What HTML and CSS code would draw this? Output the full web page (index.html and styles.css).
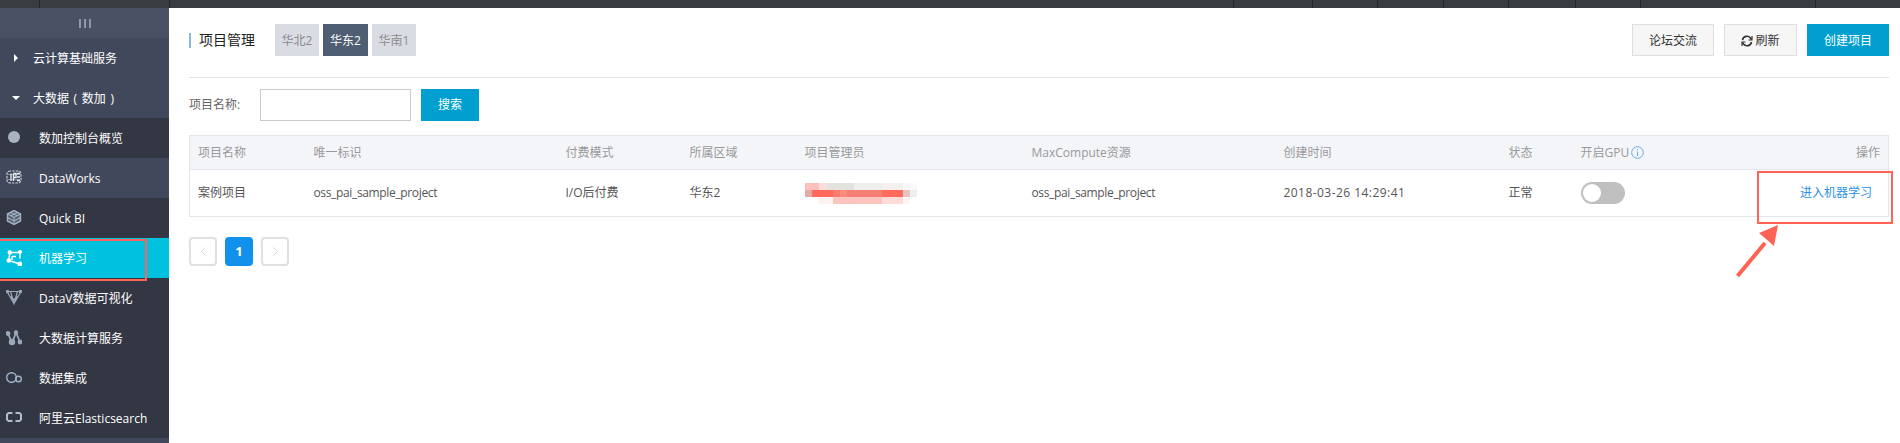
FILE: index.html
```html
<!DOCTYPE html>
<html lang="zh">
<head>
<meta charset="utf-8">
<title>项目管理</title>
<link rel="stylesheet" href="styles.css">
</head>
<body>
<header class="topbar">
  <i class="sep s1"></i><i class="sep s2"></i><span class="grow"></span>
  <i class="sep s3"></i><i class="sep s4"></i><i class="sep s5"></i><i class="sep s6"></i><i class="sep s7"></i><i class="sep s8"></i><i class="sep s9"></i><i class="sep s10"></i>
</header>
<div class="page">
  <aside class="side">
    <div class="collapse"><i></i><i></i><i></i></div>
    <div class="group"><svg class="caret" width="6" height="8" viewBox="0 0 6 8"><path d="M1 0l4 4-4 4z" fill="#fff"/></svg><span>云计算基础服务</span></div>
    <div class="group"><svg class="caret" width="8" height="6" viewBox="0 0 8 6"><path d="M0 1h8L4 5z" fill="#fff"/></svg><span class="paren">大数据 ( 数加 )</span></div>
    <a class="item dark"><svg class="ico" viewBox="0 0 16 16"><circle cx="8" cy="7" r="6" fill="#a9b3c0"/></svg><span>数加控制台概览</span></a>
    <a class="item light"><svg class="ico" viewBox="0 0 16 16" fill="none" stroke="#c3cad2" stroke-width="1.200"><path d="M4.500 1c-2 0-3.500 1-3.500 3v6c0 2 1.500 3 3.500 3h7c2 0 3.500-1 3.500-3V4c0-2-1.500-3-3.500-3z" stroke-dasharray="2.500 1"/><path d="M1 4.500h14M1 9.500h14" stroke-width=".8" stroke="#8f9bab"/><path d="M5 3.500v7.500M7.500 3.500v7.500M7.500 3.500h2.500v4H7.500M11 3.500h3M11 7h3M11 10.500h3" stroke="#eef0f3" stroke-width="1.300"/></svg><span>DataWorks</span></a>
    <a class="item dark"><svg class="ico" viewBox="0 0 16 16" fill="#566276" stroke="#a3b0bf" stroke-width="1.500"><path d="M8 .5l6.500 3.500v7L8 14.500 1.500 11V4z"/><path d="M1.500 4L8 7.500 14.500 4M8 7.500v7M4.500 2.500l7 3.500M11.500 2.500l-7 3.500M1.500 7.500L8 11l6.500-3.500" fill="none" stroke-width="1.100"/></svg><span>Quick BI</span></a>
    <a class="item active"><svg class="ico" viewBox="0 0 16 16" fill="none" stroke="#fff" stroke-width="1.500"><path d="M4 2.500h9.500M14 1.500v7M3.800 2.500L2.800 10.500l11 3.500M6 6.500h4M6 6.500v3.500"/><circle cx="3.800" cy="2.500" r="1.500" fill="#fff"/><circle cx="14" cy="2" r="1.300" fill="#fff"/><circle cx="14" cy="14" r="1.800" fill="#fff"/><circle cx="2.800" cy="10.500" r="1.600" fill="#fff"/></svg><span>机器学习</span></a>
    <a class="item dark"><svg class="ico" viewBox="0 0 16 16" fill="none" stroke="#9aa8b8" stroke-width="1.200"><path d="M1 1.500h14L8 13.500zM4.500 1.500L8 13.500 11.500 1.500M4 6.500l4 3 4-3"/><circle cx="1.500" cy="1.500" r="1.100" fill="#9aa8b8"/><circle cx="14.500" cy="1.500" r="1.100" fill="#9aa8b8"/></svg><span>DataV数据可视化</span></a>
    <a class="item dark"><svg class="ico" viewBox="0 0 16 16" fill="none" stroke="#9aa8b8" stroke-width="1.800"><path d="M2 3.500l2.500 6L6 13l4-10.500 4 9.500"/><circle cx="2" cy="3.500" r="1.500" fill="#9aa8b8"/><circle cx="6" cy="12" r="2.300" fill="#9aa8b8"/><circle cx="10" cy="2.500" r="1.300" fill="#9aa8b8"/><circle cx="14" cy="12" r="1.500" fill="#9aa8b8"/></svg><span>大数据计算服务</span></a>
    <a class="item dark"><svg class="ico" viewBox="0 0 16 16" fill="none" stroke="#9fb3c6" stroke-width="1.400"><circle cx="5.500" cy="7.500" r="4.800"/><circle cx="12.500" cy="9" r="2.800"/></svg><span>数据集成</span></a>
    <a class="item dark"><svg class="ico" viewBox="0 0 16 16" fill="none" stroke="#b3bcc6" stroke-width="2"><path d="M6.500 3H2.500L1 4.500v5L2.500 11h4M9.500 3h4L15 4.500v5L13.500 11h-4"/></svg><span>阿里云Elasticsearch</span></a>
    <div class="side-foot"></div>
  </aside>
  <main class="main">
    <div class="head">
      <h1 class="title">项目管理</h1>
      <div class="tabs">
        <a class="tab">华北2</a><a class="tab on">华东2</a><a class="tab">华南1</a>
      </div>
      <div class="actions">
        <a class="btn">论坛交流</a>
        <a class="btn btn-refresh"><svg class="refresh" viewBox="0 0 12 12" fill="none" stroke="#333" stroke-width="1.600"><path d="M1.500 5A4.500 4.500 0 0 1 9.500 3L10.500 4.500M10.500 7A4.500 4.500 0 0 1 2.500 9L1.500 7.500"/><path d="M11 1v4H7.500M1 11V7h3.500" stroke-width="1.200"/></svg>刷新</a>
        <a class="btn primary">创建项目</a>
      </div>
    </div>
    <form class="search">
      <label class="search-label">项目名称:</label>
      <input class="search-input" type="text">
      <a class="search-btn">搜索</a>
    </form>
    <table class="grid">
      <colgroup>
        <col class="c1"><col class="c2"><col class="c3"><col class="c4"><col class="c5"><col class="c6"><col class="c7"><col class="c8"><col class="c9"><col>
      </colgroup>
      <thead>
        <tr>
          <th>项目名称</th><th>唯一标识</th><th>付费模式</th><th>所属区域</th><th>项目管理员</th><th>MaxCompute资源</th><th>创建时间</th><th>状态</th>
          <th>开启GPU<svg class="info" viewBox="0 0 13 13" fill="none" stroke="#6aa6e8"><circle cx="6.500" cy="6.500" r="5.800"/><path d="M6.500 5.500v4.500M6.500 3v1.300"/></svg></th>
          <th class="right">操作</th>
        </tr>
      </thead>
      <tbody>
        <tr>
          <td>案例项目</td><td class="tight">oss_pai_sample_project</td><td>I/O后付费</td><td>华东2</td>
          <td>
            <svg class="mosaic" width="112" height="21" viewBox="0 0 112 21" shape-rendering="crispEdges">
              <rect x="0" y="0" width="14" height="7" fill="#ffc0bb"/><rect x="14" y="0" width="7" height="7" fill="#fde0dd"/><rect x="21" y="0" width="28" height="7" fill="#e2e2de"/><rect x="49" y="0" width="28" height="7" fill="#eeeeec"/><rect x="77" y="0" width="21" height="7" fill="#f5f0f0"/><rect x="98" y="0" width="14" height="7" fill="#fafafa"/>
              <rect x="0" y="7" width="7" height="7" fill="#e6a9a4"/><rect x="7" y="7" width="21" height="7" fill="#ff6a5c"/><rect x="28" y="7" width="7" height="7" fill="#fb7a6e"/><rect x="35" y="7" width="7" height="7" fill="#ff8a7e"/><rect x="42" y="7" width="35" height="7" fill="#f47f74"/><rect x="77" y="7" width="21" height="7" fill="#ff6a5c"/><rect x="98" y="7" width="7" height="7" fill="#e2c4c3"/><rect x="105" y="7" width="7" height="7" fill="#eeeeea"/>
              <rect x="14" y="14" width="14" height="7" fill="#fff3f1"/><rect x="28" y="14" width="49" height="7" fill="#ffc4be"/><rect x="77" y="14" width="21" height="7" fill="#ffdcd8"/><rect x="98" y="14" width="7" height="7" fill="#fff5f4"/>
            </svg>
          </td>
          <td class="tight">oss_pai_sample_project</td><td class="wide">2018-03-26 14:29:41</td><td>正常</td>
          <td><span class="switch"><i></i></span></td>
          <td class="right"><a class="link">进入机器学习</a></td>
        </tr>
      </tbody>
    </table>
    <nav class="pager">
      <a class="pg"><svg width="7" height="9" viewBox="0 0 7 9" fill="none" stroke="#d5d5d5"><path d="M5.500 .5l-4 4 4 4"/></svg></a>
      <a class="pg cur">1</a>
      <a class="pg"><svg width="7" height="9" viewBox="0 0 7 9" fill="none" stroke="#d5d5d5"><path d="M1.500 .5l4 4-4 4"/></svg></a>
    </nav>
  </main>
</div>
<div class="mark mark-side"></div>
<div class="mark mark-op"></div>
<svg class="arrow" width="46" height="60" viewBox="0 0 46 60"><path d="M2.500 54L30 21" stroke="#ff6355" stroke-width="4" fill="none"/><path d="M43 3L39 24 24 11z" fill="#ff6355"/></svg>
</body>
</html>
```
FILE: styles.css
```css
* { box-sizing: border-box; }
html, body { margin: 0; height: 100%; }
body {
  position: relative;
  height: 443px;
  overflow: hidden;
  background: #fff;
  font: 12px/1.5 "Open Sans", "Noto Sans CJK SC", sans-serif;
  color: #333;
}
a { text-decoration: none; color: inherit; }

.topbar { display: flex; height: 8px; background: #383d42; }
.sep { width: 1px; background: #24282c; }
.grow { flex: 0 0 1063px; }
.s4 { margin-left: 78px; }
.s5 { margin-left: 64px; }
.s6 { margin-left: 65px; }
.s7 { margin-left: 64px; }
.s8 { margin-left: 66px; }
.s9 { margin-left: 64px; }
.s10 { margin-left: 174px; }
.s1 { margin-left: 39px; }
.s2 { margin-left: 129px; }

.page { display: flex; height: 435px; }

.side { flex: 0 0 169px; display: flex; flex-direction: column; background: #42485c; color: #fff; }
.collapse { height: 30px; display: flex; align-items: center; justify-content: center; gap: 3px; background: #4a5165; }
.collapse i { width: 2px; height: 9px; background: #8d99a8; }
.group { height: 40px; display: flex; align-items: center; padding-left: 12px; }
.group .caret { flex: 0 0 8px; margin-right: 13px; }
.group span { white-space: nowrap; padding-top: 2px; }
.group .paren { word-spacing: 1.500px; }
.item { height: 40px; display: flex; align-items: center; padding-left: 6px; white-space: nowrap; }
.item span { padding-top: 2px; }
.item .ico { width: 16px; height: 16px; margin-right: 17px; flex: none; }
.item.dark { background: #333643; }
.item.light { background: #42485c; }
.item.active { background: #00c1de; }
.side-foot { flex: 1; background: #42485c; }

.main { flex: 1; padding: 16px 11px 0 20px; min-width: 0; }
.head { display: flex; align-items: center; height: 32px; }
.title {
  margin: 0;
  padding-left: 8px;
  padding-bottom: 2px;
  font-size: 14px;
  font-weight: 400;
  line-height: 13px;
  border-left: 2px solid #88b7e0;
  width: 86px;
  white-space: nowrap;
  color: #222;
}
.tabs { display: flex; gap: 4px; }
.tab { width: 44px; height: 32px; line-height: 34px; text-align: center; background: #d9dce3; color: #8b8b8b; }
.tab.on { width: 45px; background: #4f5e72; color: #fff; }
.actions { margin-left: auto; display: flex; gap: 10px; }
.btn {
  height: 32px; width: 82px;
  display: flex; align-items: center; justify-content: center;
  background: #f6f6f6; border: 1px solid #dedede; color: #333;
  padding-top: 2px;
}
.btn-refresh { width: 73px; }
.refresh { width: 12px; height: 12px; margin-right: 2px; }
.btn.primary { background: #009fcf; border: 0; color: #fff; }

.search {
  display: flex; align-items: center; height: 44px;
  margin-top: 21px; padding-top: 11px;
  border-top: 1px solid #e1e1e1;
}
.search-label { width: 71px; color: #666; }
.search-input { width: 151px; height: 32px; border: 1px solid #cbcbcb; background: #fff; padding: 0 8px; outline: 0; }
.search-btn { margin-left: 10px; width: 58px; height: 32px; line-height: 32px; text-align: center; background: #009fcf; color: #fff; }

.grid { width: 100%; margin-top: 14px; border-collapse: collapse; table-layout: fixed; border: 1px solid #e3e6eb; }
.grid th { height: 34px; background: #f4f5f9; font-weight: 400; color: #999; text-align: left; padding: 0 0 0 8px; border-bottom: 1px solid #e3e6eb; white-space: nowrap; }
.grid td { height: 47px; padding: 0 0 0 8px; color: #555; white-space: nowrap; }
.grid .right { text-align: right; padding: 0 8px 0 0; }
.grid td.tight { letter-spacing: -.35px; }
.grid td.wide { letter-spacing: .45px; }
.c1 { width: 116px; }
.c2 { width: 252px; }
.c3 { width: 124px; }
.c4 { width: 115px; }
.c5 { width: 227px; }
.c6 { width: 252px; }
.c7 { width: 225px; }
.c8 { width: 72px; }
.c9 { width: 130px; }
.info { width: 13px; height: 13px; margin-left: 2px; vertical-align: -2px; }
.mosaic { display: block; }
.switch { display: block; width: 44px; height: 22px; border-radius: 11px; background: #c0c0c0; padding: 2px; }
.switch i { display: block; width: 18px; height: 18px; border-radius: 50%; background: #fff; }
.grid .right .link { color: #2a8fe8; margin-right: 8px; }

.pager { display: flex; gap: 8px; margin-top: 20px; }
.pg { width: 28px; height: 29px; display: flex; align-items: center; justify-content: center; border: 2px solid #e0e0e0; border-radius: 4px; background: #fff; }
.pg.cur { background: #1190ec; border-color: #1190ec; color: #fff; font-weight: 700; font-size: 13px; }

.mark { position: absolute; border: 2px solid #ff6355; }
.mark-side { left: -3px; top: 239px; width: 150px; height: 42px; }
.mark-op { left: 1757px; top: 171px; width: 136px; height: 53px; }
.arrow { position: absolute; left: 1735px; top: 222px; }
```
